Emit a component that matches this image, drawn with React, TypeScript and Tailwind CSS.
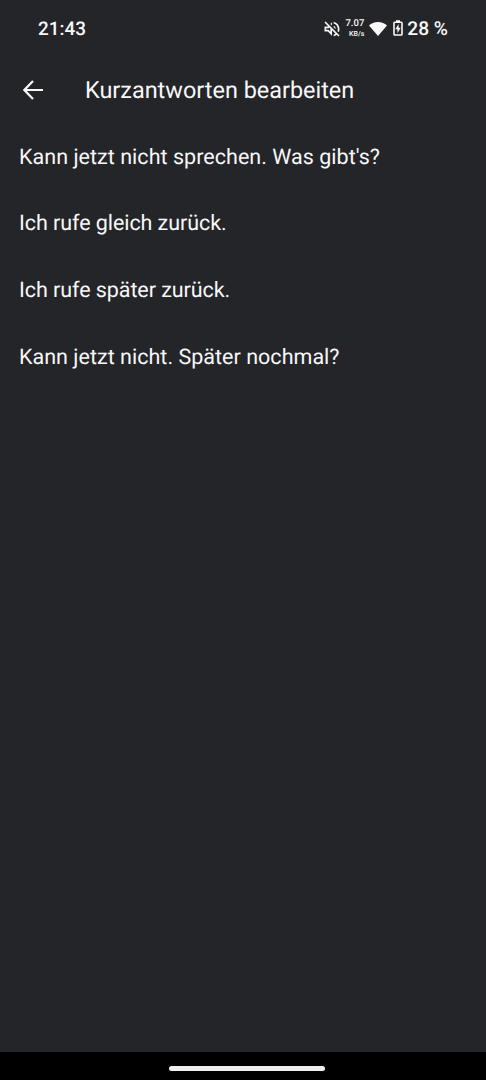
const quickResponses = [
    { text: "Kann jetzt nicht sprechen. Was gibt's?", tracking: 'tracking-[0.03px]' },
    { text: 'Ich rufe gleich zurück.', tracking: 'tracking-[-0.07px]' },
    { text: 'Ich rufe später zurück.', tracking: 'tracking-[-0.07px]' },
    { text: 'Kann jetzt nicht. Später nochmal?', tracking: 'tracking-[0.02px]' },
];

function MutedIcon() {
    return (
        <svg viewBox="0 0 24 24" className="size-[20px]" fill="currentColor" aria-hidden="true">
            <path d="M4.34 2.93 2.93 4.34 7.29 8.7 7 9H3v6h4l5 5v-6.59l4.18 4.18c-.65.49-1.38.88-2.18 1.11v2.06a8.94 8.94 0 0 0 3.61-1.75l2.05 2.05 1.41-1.41L4.34 2.93zM10 15.17 7.83 13H5v-2h2.83l.88-.88L10 11.41v3.76zM19 12c0 .82-.15 1.61-.41 2.34l1.53 1.53c.56-1.17.88-2.48.88-3.87 0-4.28-2.99-7.86-7-8.77v2.06c2.89.86 5 3.54 5 6.71zm-7-8-1.88 1.88L12 7.76zm4.5 8A4.5 4.5 0 0 0 14 7.97v1.79l2.48 2.48c.01-.08.02-.16.02-.24z" />
        </svg>
    );
}

function WifiIcon() {
    return (
        <svg viewBox="0 0 18 14" className="h-[14px] w-[18px]" fill="currentColor" aria-hidden="true">
            <path d="M9 14 0 3.4C2.2 1.3 5.4 0 9 0s6.8 1.3 9 3.4L9 14z" />
        </svg>
    );
}

function BatteryIcon() {
    return (
        <svg viewBox="0 0 10 16" className="h-4 w-[10px]" fill="none" aria-hidden="true">
            <path d="M3 .2h4V2H3z" fill="currentColor" />
            <rect x="1" y="2.2" width="8" height="12.8" rx=".8" stroke="currentColor" strokeWidth="1.6" />
            <path d="M5.6 4 2.3 9.2h2.1v4l3.3-5.4H5.6z" fill="currentColor" />
        </svg>
    );
}

function StatusBar() {
    return (
        <div className="flex h-[57px] items-center justify-between px-[38px]">
            <span className="text-[18.9px] leading-6 font-medium">21:43</span>
            <div className="flex items-center">
                <MutedIcon />
                <div className="mr-[5px] ml-[3px] flex flex-col items-end font-medium">
                    <span className="text-[9.5px] leading-[10px]">7.07</span>
                    <span className="text-[7px] leading-[10px]">KB/s</span>
                </div>
                <WifiIcon />
                <span className="mb-px ml-[6px]">
                    <BatteryIcon />
                </span>
                <span className="ml-1 pt-px text-[19.2px] leading-6 font-medium">28 %</span>
            </div>
        </div>
    );
}

export default function App() {
    return (
        <div className="flex h-[1080px] w-[486px] flex-col bg-[#242529] font-['Roboto',sans-serif] text-[#f8f8f8] [text-rendering:geometricPrecision]">
            <StatusBar />
            <header className="flex h-[66px] items-center pl-[23px]">
                <button type="button" aria-label="Zurück">
                    <svg viewBox="0 0 20 20" className="size-5" fill="none" stroke="currentColor" strokeWidth="2.2" aria-hidden="true">
                        <path d="M10 1 1.4 10 10 19M1.4 10H20" />
                    </svg>
                </button>
                <h1 className="ml-[42px] text-[23.45px] leading-8">Kurzantworten bearbeiten</h1>
            </header>
            <ul className="flex-1 pt-[1.2px]">
                {quickResponses.map(({ text, tracking }) => (
                    <li key={text} className={`flex h-[66.7px] items-center pl-[19px] text-[21.5px] leading-7 ${tracking}`}>
                        {text}
                    </li>
                ))}
            </ul>
            <div className="flex h-7 items-center justify-center bg-black pt-[5px] pl-2">
                <div className="h-[5px] w-[156px] rounded-full bg-[#efefef]" />
            </div>
        </div>
    );
}
